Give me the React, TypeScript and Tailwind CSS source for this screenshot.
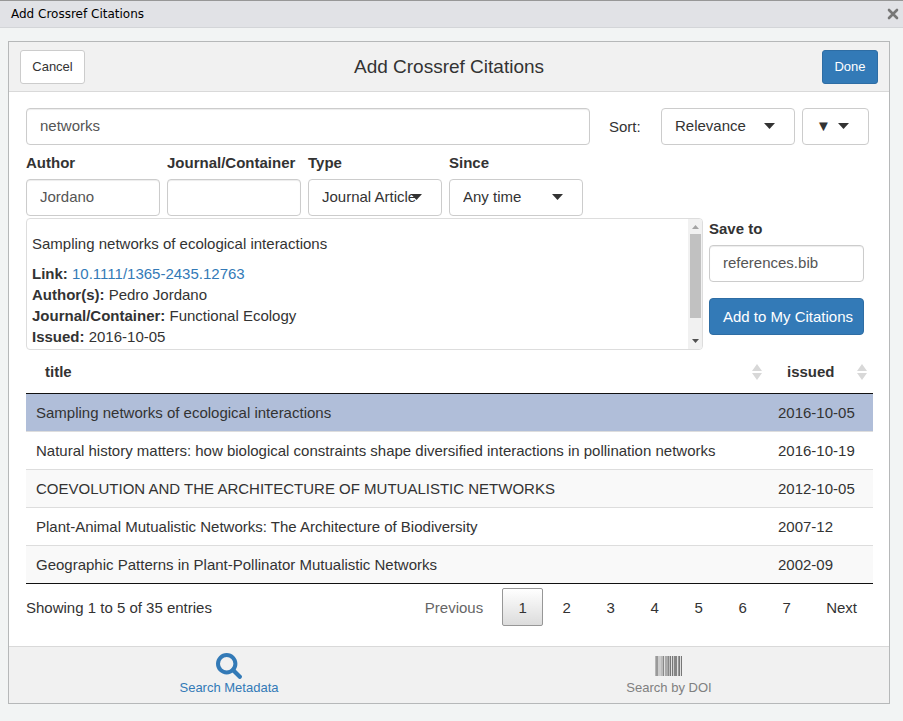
import { useState } from "react";
import type { ReactNode } from "react";

type Citation = { title: string; issued: string };

const citations: Citation[] = [
  { title: "Sampling networks of ecological interactions", issued: "2016-10-05" },
  {
    title:
      "Natural history matters: how biological constraints shape diversified interactions in pollination networks",
    issued: "2016-10-19",
  },
  { title: "COEVOLUTION AND THE ARCHITECTURE OF MUTUALISTIC NETWORKS", issued: "2012-10-05" },
  { title: "Plant-Animal Mutualistic Networks: The Architecture of Biodiversity", issued: "2007-12" },
  { title: "Geographic Patterns in Plant-Pollinator Mutualistic Networks", issued: "2002-09" },
];

const fieldClass =
  "h-[37px] w-full rounded border border-[#ccc] bg-white px-[13px] pb-[2px] text-[15px] text-[#555] shadow-[inset_0_1px_1px_rgba(0,0,0,0.075)] outline-none";

function SelectBox({
  id,
  label,
  options,
  className = "",
}: {
  id: string;
  label?: string;
  options: string[];
  className?: string;
}) {
  return (
    <div className={`relative ${className}`}>
      <select
        id={id}
        aria-label={label}
        className="h-[37px] w-full appearance-none rounded border border-[#ccc] bg-white pb-[2px] pl-[13px] text-[15px] text-[#333] outline-none"
      >
        {options.map((o) => (
          <option key={o}>{o}</option>
        ))}
      </select>
      <svg
        className="pointer-events-none absolute top-[15px] right-5 h-[6px] w-[11px]"
        viewBox="0 0 11 6"
        aria-hidden="true"
      >
        <path d="M0 0h11L5.500 6z" fill="#333" />
      </svg>
    </div>
  );
}

function Field({ id, label, children }: { id: string; label: string; children: ReactNode }) {
  return (
    <div className="w-[134px]">
      <label htmlFor={id} className="mb-[6px] block whitespace-nowrap font-bold">
        {label}
      </label>
      {children}
    </div>
  );
}

function SortHeader({ name }: { name: string }) {
  return (
    <button type="button" className="flex h-[43px] w-full items-center justify-between pr-[6px] pl-[19px] font-bold">
      {name}
      <svg className="h-4 w-[10px]" viewBox="0 0 10 16" fill="#d8d8d8" aria-hidden="true">
        <path d="M5 0l5 7H0zM0 9h10l-5 7z" />
      </svg>
    </button>
  );
}

function Magnifier() {
  return (
    <svg className="h-[26px] w-[26px]" viewBox="0 0 26 26" fill="none" stroke="currentColor" aria-hidden="true">
      <circle cx="10.700" cy="10.700" r="8.700" strokeWidth="4" />
      <path d="M17 17l6.800 6.800" strokeWidth="4.200" strokeLinecap="round" />
    </svg>
  );
}

function Barcode() {
  const bars: [number, number, string][] = [
    [0, 1, "#b5b5b5"],
    [1, 2, "#999"],
    [3, 3, "#ccc"],
    [6, 2, "#bbb"],
    [8, 1, "#888"],
    [10, 3, "#aaa"],
    [13, 1, "#888"],
    [14, 1, "#bbb"],
    [15, 1, "#777"],
    [17, 1, "#777"],
    [18, 1, "#ccc"],
    [19, 1, "#888"],
    [20, 2, "#858585"],
    [23, 1, "#999"],
    [24, 1, "#777"],
    [26, 1, "#777"],
  ];
  return (
    <svg className="h-5 w-7" viewBox="0 0 28 20" aria-hidden="true">
      <rect width="27" height="20" fill="#e0e0e0" />
      {bars.map(([x, w, c]) => (
        <rect key={x} x={x} width={w} height="20" fill={c} />
      ))}
    </svg>
  );
}

export default function App() {
  const [selected, setSelected] = useState(0);
  const [page, setPage] = useState(1);

  return (
    <div className="min-h-screen bg-[#f2f4f4] font-['Liberation_Sans',Arial,sans-serif] text-[15px] leading-[21px] text-[#333]">
      <div className="flex h-7 items-center justify-between border-t border-b border-t-[#979797] border-b-[#d3d5d8] bg-[#e1e2e6] pr-1 pl-[11px]">
        <span className="font-['DejaVu_Sans',sans-serif] text-[12px] text-black">Add Crossref Citations</span>
        <button type="button" aria-label="Close">
          <svg className="h-3 w-3" viewBox="0 0 12 12" aria-hidden="true">
            <path d="M2 2l8 8M10 2l-8 8" stroke="#777" strokeWidth="2.600" strokeLinecap="round" />
          </svg>
        </button>
      </div>

      <div className="mt-[13px] mr-[13px] ml-2 border border-[#b6b8b9] bg-white">
        <header className="grid h-[50px] grid-cols-[1fr_auto_1fr] items-center border-b border-[#d9d9d9] bg-[#f1f1f1] px-[11px]">
          <button
            type="button"
            className="h-[34px] w-[65px] justify-self-start rounded-[3px] border border-[#ccc] bg-white text-[13px]"
          >
            Cancel
          </button>
          <h1 className="pb-px text-[19px]">Add Crossref Citations</h1>
          <button
            type="button"
            className="h-[34px] w-14 justify-self-end rounded-[3px] border border-[#2e6da4] bg-[#337ab7] text-[13px] text-white"
          >
            Done
          </button>
        </header>

        <main className="pt-4 pr-4 pb-5 pl-[17px]">
          <div className="mr-1 flex items-center gap-[7px]">
            <input aria-label="Search terms" defaultValue="networks" className={`${fieldClass} min-w-0 flex-1`} />
            <label htmlFor="sort" className="ml-3 w-[45px]">
              Sort:
            </label>
            <SelectBox id="sort" options={["Relevance", "Score", "Updated", "Published"]} className="w-[134px]" />
            <SelectBox id="order" label="Sort order" options={["▼", "▲"]} className="w-[67px]" />
          </div>

          <div className="mt-[7px] flex gap-[7px]">
            <Field id="author" label="Author">
              <input id="author" defaultValue="Jordano" className={fieldClass} />
            </Field>
            <Field id="journal" label="Journal/Container">
              <input id="journal" className={fieldClass} />
            </Field>
            <Field id="type" label="Type">
              <SelectBox id="type" options={["Journal Article", "Book", "Dataset"]} />
            </Field>
            <Field id="since" label="Since">
              <SelectBox id="since" options={["Any time", "2020", "2010", "2000"]} />
            </Field>
          </div>

          <div className="mt-[2px] mr-[9px] flex gap-[6px]">
            <section className="flex h-[132px] flex-1 overflow-hidden rounded border border-[#ddd]">
              <div className="flex-1 pt-[14px] pl-[5px]">
                <p className="mb-[9px]">Sampling networks of ecological interactions</p>
                <p>
                  <b>Link:</b>{" "}
                  <a href="#doi" className="text-[#337ab7]">
                    10.1111/1365-2435.12763
                  </a>
                </p>
                <p>
                  <b>Author(s):</b> Pedro Jordano
                </p>
                <p>
                  <b>Journal/Container:</b> Functional Ecology
                </p>
                <p>
                  <b>Issued:</b> 2016-10-05
                </p>
              </div>
              <div className="flex w-[14px] flex-col items-center bg-[#f1f1f1]" aria-hidden="true">
                <svg className="h-[15px] w-[7px]" viewBox="0 0 7 15">
                  <path d="M0 10h7L3.500 6z" fill="#a3a3a3" />
                </svg>
                <div className="h-[84px] w-[11px] bg-[#c1c1c1]" />
                <svg className="mt-auto h-[15px] w-[7px]" viewBox="0 0 7 15">
                  <path d="M0 5h7L3.500 9z" fill="#505050" />
                </svg>
              </div>
            </section>
            <div className="w-[155px]">
              <label htmlFor="save" className="mb-[6px] block font-bold">
                Save to
              </label>
              <input id="save" defaultValue="references.bib" className={fieldClass} />
              <button
                type="button"
                className="mt-4 h-[37px] w-full rounded border border-[#2e6da4] bg-[#337ab7] pl-[13px] text-left whitespace-nowrap text-white"
              >
                Add to My Citations
              </button>
            </div>
          </div>

          <table className="w-full table-fixed border-separate border-spacing-0">
            <thead>
              <tr>
                <th className="border-b border-[#111] p-0">
                  <SortHeader name="title" />
                </th>
                <th className="w-[105px] border-b border-[#111] p-0">
                  <SortHeader name="issued" />
                </th>
              </tr>
            </thead>
            <tbody>
              {citations.map((c, i) => {
                const bg = i === selected ? "bg-[#b0bed9]" : i % 2 === 0 ? "bg-[#f9f9f9]" : "bg-white";
                const line = i === citations.length - 1 ? "border-[#111]" : "border-[#ddd]";
                return (
                  <tr key={c.title} className={bg} onClick={() => setSelected(i)}>
                    <td className={`h-[38px] border-b px-[10px] py-0 whitespace-nowrap ${line}`}>{c.title}</td>
                    <td className={`h-[38px] border-b px-[10px] py-0 whitespace-nowrap ${line}`}>{c.issued}</td>
                  </tr>
                );
              })}
            </tbody>
          </table>

          <div className="mt-1 flex items-center justify-between">
            <p>Showing 1 to 5 of 35 entries</p>
            <nav className="flex gap-[3px]" aria-label="Pages">
              <button type="button" className="h-[38px] px-4 text-[#666]">
                Previous
              </button>
              {[1, 2, 3, 4, 5, 6, 7].map((n) => (
                <button
                  key={n}
                  type="button"
                  onClick={() => setPage(n)}
                  className={`h-[38px] w-[41px] rounded-[2px] border ${
                    n === page ? "border-[#979797] bg-linear-to-b from-white to-[#dcdcdc]" : "border-transparent"
                  }`}
                >
                  {n}
                </button>
              ))}
              <button type="button" className="h-[38px] px-4">
                Next
              </button>
            </nav>
          </div>
        </main>

        <footer className="grid h-[57px] grid-cols-2 border-t border-[#d9d9d9] bg-[#f1f1f1] text-[13px] leading-4">
          <button type="button" className="flex flex-col items-center pt-[6px] text-[#337ab7]">
            <span className="mb-px h-[26px]">
              <Magnifier />
            </span>
            Search Metadata
          </button>
          <button type="button" className="flex flex-col items-center pt-[9px] text-[#808080]">
            <span className="mb-1 h-5">
              <Barcode />
            </span>
            Search by DOI
          </button>
        </footer>
      </div>
    </div>
  );
}
